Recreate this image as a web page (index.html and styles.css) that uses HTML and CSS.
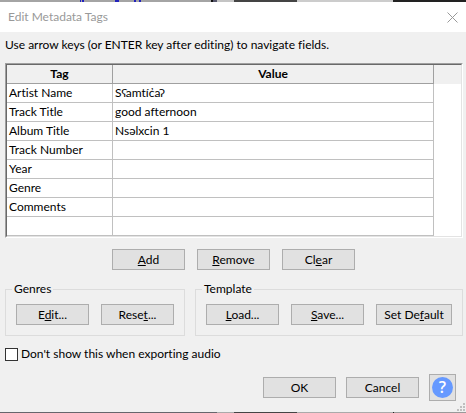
FILE: index.html
```html
<!DOCTYPE html>
<html lang="en">
<head>
<meta charset="utf-8">
<title>Edit Metadata Tags</title>
<link rel="stylesheet" href="styles.css">
</head>
<body>
<div class="strip strip-top"></div>
<main class="dialog">
  <header class="titlebar">
    <h1 class="title">Edit Metadata Tags</h1>
    <button class="close" type="button" aria-label="Close">
      <svg width="11" height="11" viewBox="0 0 11 11"><path d="M.5.5l10 10M10.5.5l-10 10" stroke="#999" fill="none"/></svg>
    </button>
  </header>
  <form class="content">
    <p class="hint">Use arrow keys (or ENTER key after editing) to navigate fields.</p>
    <div class="grid">
      <table class="tags">
        <colgroup><col class="col-tag"><col><col class="col-rest"></colgroup>
        <thead><tr><th>Tag</th><th>Value</th><td></td></tr></thead>
        <tbody>
          <tr><td>Artist Name</td><td>Sʕamtíc̓aʔ</td></tr>
          <tr><td>Track Title</td><td>good afternoon</td></tr>
          <tr><td>Album Title</td><td>Nsəlxcin 1</td></tr>
          <tr><td>Track Number</td><td></td></tr>
          <tr><td>Year</td><td></td></tr>
          <tr><td>Genre</td><td></td></tr>
          <tr><td>Comments</td><td></td></tr>
          <tr><td></td><td></td></tr>
        </tbody>
      </table>
    </div>
    <div class="row-actions">
      <button class="btn" type="button"><u>A</u>dd</button>
      <button class="btn" type="button"><u>R</u>emove</button>
      <button class="btn" type="button">Cl<u>e</u>ar</button>
    </div>
    <div class="groups">
      <fieldset class="group">
        <legend>Genres</legend>
        <div class="group-buttons">
          <button class="btn" type="button">E<u>d</u>it...</button>
          <button class="btn" type="button">Rese<u>t</u>...</button>
        </div>
      </fieldset>
      <fieldset class="group group-wide">
        <legend>Template</legend>
        <div class="group-buttons">
          <button class="btn" type="button"><u>L</u>oad...</button>
          <button class="btn" type="button"><u>S</u>ave...</button>
          <button class="btn btn-wide" type="button">Set De<u>f</u>ault</button>
        </div>
      </fieldset>
    </div>
    <label class="check"><input type="checkbox">Don't show this when exporting audio</label>
    <div class="footer">
      <button class="btn" type="submit">OK</button>
      <button class="btn" type="button">Cancel</button>
      <button class="btn help" type="button" aria-label="Help"><span class="disc">?</span></button>
    </div>
  </form>
  <svg class="grip" width="8" height="8" viewBox="0 0 8 8" fill="#bfbfbf"><path d="M6 0h2v2H6zM3 3h2v2H3zM6 3h2v2H6zM0 6h2v2H0zM3 6h2v2H3zM6 6h2v2H6z"/></svg>
</main>
<div class="strip strip-bottom"></div>
</body>
</html>
```

FILE: styles.css
```css
* { box-sizing: border-box; }

body {
  margin: 0;
  background: #f0f0f0;
  color: #000;
  font: 12px/16px Lato, "Open Sans", "Noto Sans", sans-serif;
  font-variant-ligatures: none;
}

.strip-top {
  height: 2px;
  background: linear-gradient(90deg, #a4a4a4 80px, #2222bb 80px 81px, #a4a4a4 81px 82px, #2222bb 82px 84px, #a4a4a4 84px 115px, #2222bb 115px 119px, #a4a4a4 119px 134px, #2222bb 134px 136px, #a4a4a4 136px 139px, #2222bb 139px 141px, #a4a4a4 141px 211px, #111 211px 213px, #55556a 213px 217px, #c4c4c4 217px 234px, #444 234px 297px, #ccc 297px 393px, #222 393px);
}

.strip-bottom {
  height: 1px;
  background: linear-gradient(90deg, #66666c 217px, #aaa 217px 234px, #444 234px 297px, #aaa 297px 393px, #222 393px 394px, #999 394px);
}

.dialog { position: relative; }

.titlebar {
  display: flex;
  align-items: center;
  justify-content: space-between;
  height: 30px;
  padding: 0 8px;
  background: #fff;
}

.title {
  margin: 0;
  color: #999;
  font-size: 12px;
  font-weight: 400;
}

.close {
  display: flex;
  padding: 0;
  border: 0;
  background: none;
}

.content { padding: 5px 3px 11px 5px; }

.hint { margin: 0 0 10px; }

.grid {
  border: 1px solid;
  border-color: #a0a0a0 #fff #fff #a0a0a0;
  background: #fff;
}

.tags {
  width: 100%;
  border: 1px solid;
  border-color: #696969 #e3e3e3 #e3e3e3 #696969;
  border-spacing: 0;
  border-collapse: separate;
  table-layout: fixed;
}

.col-tag { width: 106px; }
.col-rest { width: 27px; }

.tags th,
.tags td {
  height: 19px;
  padding: 0 2px;
  border: solid #c0c0c0;
  border-width: 0 1px 1px 0;
  line-height: 18px;
  text-align: left;
}

.tags thead { background: #f0f0f0; }
.tags thead th { border-color: #a0a0a0; text-align: center; }
.tags thead td { border: 0; }

.btn {
  width: 73px;
  height: 21px;
  padding: 0;
  border: 1px solid #adadad;
  background: #e1e1e1;
  color: #000;
  font: inherit;
  font-variant-ligatures: none;
  line-height: 18px;
}

.btn-wide { width: 76px; }

.row-actions {
  display: flex;
  justify-content: center;
  gap: 12px;
  margin-top: 11px;
  padding-right: 1px;
}

.groups {
  display: flex;
  gap: 10px;
  margin-top: 11px;
}

.group {
  flex: 0 0 auto;
  min-width: 0;
  margin: 0;
  padding: 7px 10px 10px;
  border: 1px solid #dcdcdc;
}

.group-wide { flex: 1; }

.group legend {
  margin-left: -4px;
  padding: 0 2px;
}

.group-buttons {
  display: flex;
  gap: 12px;
}

.check {
  display: flex;
  align-items: center;
  gap: 3px;
  margin-top: 10px;
}

.check input {
  width: 13px;
  height: 13px;
  margin: 0;
  border: 1px solid #333;
  background: #fff;
  appearance: none;
}

.footer {
  display: flex;
  align-items: center;
  justify-content: flex-end;
  gap: 10px;
  margin-top: 12px;
  padding-right: 7px;
}

.help {
  display: flex;
  align-items: center;
  justify-content: center;
  width: 27px;
  height: 27px;
}

.disc {
  width: 21px;
  height: 21px;
  border-radius: 50%;
  background: #6699ff;
  color: #fff;
  font-family: "Open Sans", sans-serif;
  font-size: 16px;
  font-weight: 600;
  line-height: 21px;
}

.grip {
  position: absolute;
  right: 1px;
  bottom: 1px;
}
```
